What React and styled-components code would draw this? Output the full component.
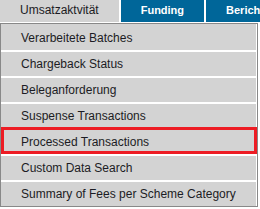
import styled, { createGlobalStyle } from "styled-components";

const GlobalStyle = createGlobalStyle`
  body {
    margin: 0;
    background: #fff;
    font-family: "Liberation Sans", Arial, sans-serif;
  }
`;

const tabs = [
  { label: "Umsatzaktvität", active: true },
  { label: "Funding" },
  { label: "Berichte" },
];

const items = [
  "Verarbeitete Batches",
  "Chargeback Status",
  "Beleganforderung",
  "Suspense Transactions",
  "Processed Transactions",
  "Custom Data Search",
  "Summary of Fees per Scheme Category",
];

const App = () => {
  return (
    <Container>
      <GlobalStyle />
      <TabBar>
        {tabs.map((t) => (
          <Tab key={t.label} $active={t.active}>
            {t.label}
          </Tab>
        ))}
      </TabBar>
      <Menu>
        {items.map((label, i) => (
          <Item
            key={label}
            $first={i === 0}
            $highlighted={label === "Processed Transactions"}
          >
            {label}
          </Item>
        ))}
      </Menu>
    </Container>
  );
};

const Container = styled.div`
  width: 260px;
  overflow: hidden;
`;

const TabBar = styled.div`
  display: flex;
  gap: 2px;
  height: 22px;
  white-space: nowrap;
`;

const Tab = styled.div`
  flex-shrink: 0;
  height: 22px;
  padding: 0 20px;
  line-height: 20px;
  font-size: ${(p) => (p.$active ? "12px" : "11px")};
  font-weight: ${(p) => (p.$active ? "normal" : "bold")};
  background: ${(p) => (p.$active ? "#d3d3d3" : "#006699")};
  color: ${(p) => (p.$active ? "#1c1c24" : "#fff")};
  box-sizing: border-box;
`;

const Menu = styled.ul`
  list-style: none;
  margin: 1px 0 0;
  padding: 0;
  width: 256px;
  border: 1px solid #888;
  background: #fff;
`;

const Item = styled.li`
  position: relative;
  height: 24px;
  line-height: 24px;
  margin-right: 1px;
  padding-left: 20px;
  font-size: 12px;
  color: #1c1c24;
  background: #d3d3d3;
  border-top: 2px solid ${(p) => (p.$first ? "#d3d3d3" : "#fff")};
  white-space: nowrap;

  &::after {
    content: "";
    display: ${(p) => (p.$highlighted ? "block" : "none")};
    position: absolute;
    top: -3px;
    bottom: 0;
    left: 0;
    right: -1px;
    border: 3px solid #ed1c24;
    pointer-events: none;
  }
`;

export default App;
